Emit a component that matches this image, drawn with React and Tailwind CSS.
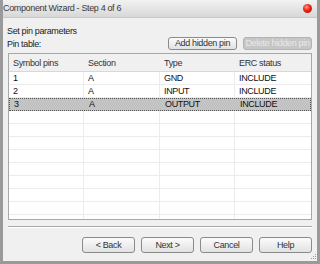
import React from "react";

const font = {
  fontFamily: '"Liberation Sans", Arial, sans-serif',
};

const rows = [
  ["1", "A", "GND", "INCLUDE"],
  ["2", "A", "INPUT", "INCLUDE"],
  ["3", "A", "OUTPUT", "INCLUDE"],
];

function Btn({ children, w, h, disabled }) {
  return (
    <div
      className={
        "flex items-center justify-center whitespace-nowrap rounded-[3px] border " +
        (disabled
          ? "border-[#b4b4b4] bg-[#c6c6c6] text-[#e9e9e9]"
          : "border-[#8a8a8a] bg-gradient-to-b from-[#fbfbfb] to-[#e2e2e2] text-[#333]")
      }
      style={{ width: w, height: h }}
    >
      {children}
    </div>
  );
}

export default function App() {
  return (
    <div
      className="relative w-[320px] h-[264px] flex flex-col bg-[#f0f0f0] text-[9px] tracking-[-0.35px] leading-none border-x-[3px] border-b-[3px] border-[#9a9a9a] overflow-hidden"
      style={font}
    >
      {/* title bar */}
      <div className="h-[18px] flex items-center justify-between bg-gradient-to-b from-[#f2f2f2] to-[#d8d8d8] border-b border-[#c8c8c8] -mx-[3px] pl-[3px] pr-[8px]">
        <span className="text-[#3a3a3a]">Component Wizard - Step 4 of 6</span>
        <div className="w-[9px] h-[9px] rounded-full bg-[radial-gradient(circle_at_40%_35%,#ff9a8a_0%,#f02010_45%,#a80800_100%)]" />
      </div>

      <div className="flex flex-col px-[5px] pt-[7px]">
        <div className="h-[12px] flex items-center text-[#222] -ml-[1px]">Set pin parameters</div>
        <div className="h-[13px] flex items-center justify-between">
          <span className="text-[#222] -ml-[1px] pt-[1px]">Pin table:</span>
          <div className="flex gap-[6px]">
            <Btn w={69} h={13}>Add hidden pin</Btn>
            <Btn w={69} h={13} disabled>Delete hidden pin</Btn>
          </div>
        </div>

        {/* table */}
        <div className="mt-[3px] h-[167px] border border-[#a8a8a8] bg-white overflow-hidden">
          <div className="grid grid-cols-[75px_76px_75px_76px] h-[18px] bg-[#f0f0f0] border-b border-[#d8d8d8] text-[#333]">
            <div className="pl-[4px] pt-[1px] flex items-center">Symbol pins</div>
            <div className="pl-[4px] pt-[1px] flex items-center">Section</div>
            <div className="pl-[4px] pt-[1px] flex items-center">Type</div>
            <div className="pl-[4px] pt-[1px] flex items-center">ERC status</div>
          </div>
          {rows.map((r, i) => {
            const sel = i === 2;
            return (
              <div
                key={i}
                className={
                  "grid grid-cols-[75px_76px_75px_76px] h-[13px] text-[#111] " +
                  (sel
                    ? "bg-[#c3c3c3] border border-dotted border-[#555]"
                    : "border-b border-[#ececec]")
                }
              >
                {r.map((c, j) => (
                  <div
                    key={j}
                    className={
                      "pl-[4px] flex items-center " +
                      (sel ? "" : j < 3 ? "border-r border-[#ececec]" : "")
                    }
                  >
                    {c}
                  </div>
                ))}
              </div>
            );
          })}
          {Array.from({ length: 9 }).map((_, i) => (
            <div
              key={i}
              className="grid grid-cols-[75px_76px_75px_76px] h-[13px] border-b border-[#ececec]"
            >
              <div className="border-r border-[#ececec]" />
              <div className="border-r border-[#ececec]" />
              <div className="border-r border-[#ececec]" />
              <div />
            </div>
          ))}
        </div>

        {/* separator */}
        <div className="mt-[6px] border-t border-[#a8a8a8] border-b border-b-white" />

        {/* buttons */}
        <div className="mt-[9px] flex justify-end gap-[6px]">
          <Btn w={53} h={16}>&lt; Back</Btn>
          <Btn w={53} h={16}>Next &gt;</Btn>
          <Btn w={53} h={16}>Cancel</Btn>
          <Btn w={53} h={16}>Help</Btn>
        </div>
      </div>

      {/* resize grip */}
      <svg className="absolute right-[0px] bottom-[0px]" width="8" height="8" viewBox="0 0 8 8">
        {[
          [6, 1],
          [4, 3],
          [6, 3],
          [2, 5],
          [4, 5],
          [6, 5],
        ].map(([x, y], i) => (
          <rect key={i} x={x} y={y} width="1" height="1" fill="#9a9a9a" />
        ))}
      </svg>
    </div>
  );
}
